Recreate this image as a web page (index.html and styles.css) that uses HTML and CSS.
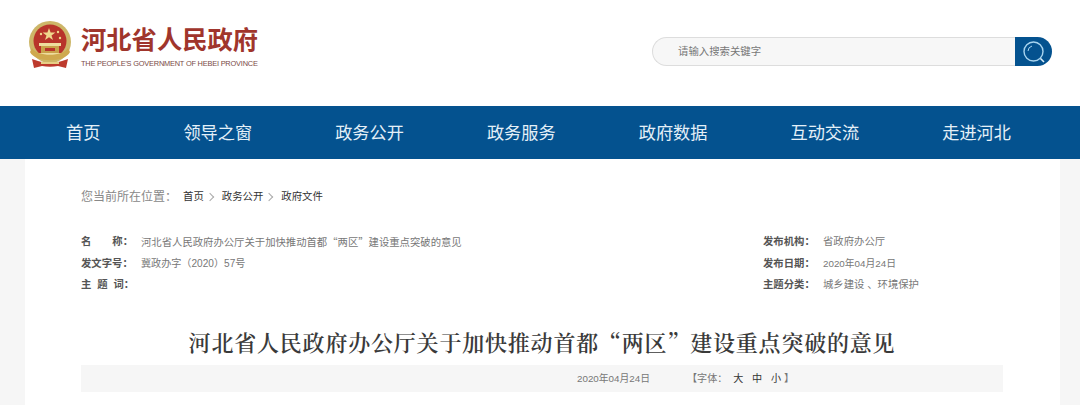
FILE: index.html
```html
<!DOCTYPE html>
<html lang="zh-CN">
<head>
    <meta charset="utf-8">
    <title>河北省人民政府</title>
    <link rel="stylesheet" href="styles.css">
</head>
<body>
    <header class="top">
        <div class="logo">
            <svg class="emblem" width="46" height="48" viewBox="0 0 46 48">
                <circle cx="23" cy="21" r="21" fill="#cdb668"/>
                <circle cx="23" cy="20" r="16.5" fill="#b8342a"/>
                <polygon points="22,7 23.6,11.6 28.4,11.6 24.5,14.4 26,19 22,16.2 18,19 19.5,14.4 15.6,11.6 20.4,11.6" fill="#f0d78c"/>
                <circle cx="14" cy="13" r="1.2" fill="#f0d78c"/>
                <circle cx="31" cy="11" r="1.2" fill="#f0d78c"/>
                <circle cx="33" cy="17" r="1.2" fill="#f0d78c"/>
                <rect x="12" y="22" width="22" height="3" fill="#eedd9e"/>
                <rect x="14" y="25" width="18" height="7" fill="#c9a24a"/>
                <rect x="18" y="27" width="10" height="3" fill="#b8342a"/>
                <rect x="9" y="32" width="28" height="3" fill="#eedd9e"/>
                <path d="M3 31 C8 42 38 42 43 31 L41 27 C36 36 10 36 5 27 Z" fill="#cfa94e"/>
                <path d="M5 38 L11 40 C18 42 28 42 35 40 L41 38 L39 47 L31 45 C26 46 20 46 15 45 L7 47 Z" fill="#bd3a2d"/>
                <rect x="14" y="41" width="18" height="2" fill="#e6cf86"/>
            </svg>
            <div class="logo-text">
                <div class="logo-cn">河北省人民政府</div>
                <div class="logo-en">THE PEOPLE'S GOVERNMENT OF HEBEI PROVINCE</div>
            </div>
        </div>
        <div class="search">
            <div class="search-input">请输入搜索关键字</div>
            <div class="search-btn">
                <svg width="26" height="26" viewBox="0 0 26 26" fill="none" stroke="#a8d4ef">
                    <circle cx="12.5" cy="12.5" r="9.5" stroke-width="1.4"/>
                    <path d="M7 12 A5.5 5.5 0 0 1 11 7" stroke-width="1"/>
                    <path d="M19.5 19.5 L23 23" stroke="#dceef9" stroke-width="1.6"/>
                </svg>
            </div>
        </div>
    </header>

    <nav class="nav">
        <a href="#">首页</a>
        <a href="#">领导之窗</a>
        <a href="#">政务公开</a>
        <a href="#">政务服务</a>
        <a href="#">政府数据</a>
        <a href="#">互动交流</a>
        <a href="#">走进河北</a>
    </nav>

    <main class="page">
        <div class="crumbs">
            <span class="crumbs-label">您当前所在位置：</span>
            <a href="#">首页</a>
            <span class="sep"></span>
            <a href="#">政务公开</a>
            <span class="sep"></span>
            <a href="#">政府文件</a>
        </div>

        <div class="meta">
            <div class="meta-col">
                <div class="meta-row"><b>名<i class="gap"></i>称：</b><span class="cjk">河北省人民政府办公厅关于加快推动首都“两区”建设重点突破的意见</span></div>
                <div class="meta-row"><b>发文字号：</b><span class="doc-no">冀政办字（2020）57号</span></div>
                <div class="meta-row"><b class="wide">主 题 词：</b><span></span></div>
            </div>
            <div class="meta-col right">
                <div class="meta-row"><b>发布机构：</b><span>省政府办公厅</span></div>
                <div class="meta-row"><b>发布日期：</b><span class="date-text">2020年04月24日</span></div>
                <div class="meta-row"><b>主题分类：</b><span>城乡建设 、环境保护</span></div>
            </div>
        </div>

        <h1 class="title">河北省人民政府办公厅关于加快推动首都“两区”建设重点突破的意见</h1>

        <div class="info-bar">
            <span class="date date-text">2020年04月24日</span>
            <span class="fontsize">【字体： <em>大</em> <em>中</em> <em>小</em>】</span>
        </div>
    </main>
</body>
</html>
```

FILE: styles.css
```css
* {
    box-sizing: border-box;
}

body {
    margin: 0;
    background-color: #f6f6f6;
    color: #555;
    font-family: "Liberation Sans", Arial, "Noto Sans CJK SC", sans-serif;
}

a {
    color: inherit;
    text-decoration: none;
}

.top {
    height: 106px;
    background-color: #fff;
    display: flex;
    justify-content: space-between;
    padding: 21px 28px 0 27px;
}

.logo {
    display: flex;
    align-items: flex-start;
    height: 50px;
}

.emblem {
    flex: none;
}

.logo-text {
    margin-left: 8px;
    padding-top: 4px;
}

.logo-cn {
    color: #a0352c;
    font-size: 25.3px;
    font-weight: bold;
    line-height: 30px;
    white-space: nowrap;
}

.logo-en {
    margin-top: 4px;
    color: #7a4a46;
    font-size: 7.4px;
    letter-spacing: -0.2px;
    line-height: 10px;
    white-space: nowrap;
}

.search {
    display: flex;
    width: 400px;
    height: 29px;
    margin-top: 16px;
}

.search-input {
    flex: 1;
    padding-left: 25px;
    background-color: #f7f7f7;
    border: 1px solid #ddd;
    border-right: 0;
    border-radius: 15px 0 0 15px;
    color: #777;
    font-size: 10.4px;
    line-height: 27px;
}

.search-btn {
    width: 37px;
    display: flex;
    align-items: center;
    justify-content: center;
    background-color: #04528f;
    border-radius: 0 15px 15px 0;
}

.nav {
    height: 53px;
    background-color: #04528f;
    display: flex;
    gap: 83px;
    padding-left: 66px;
    color: #e4f0f8;
    font-size: 17.2px;
    line-height: 54px;
}

.page {
    width: 1035px;
    height: 246px;
    margin-left: 25px;
    padding: 0 57px 0 56px;
    background-color: #fff;
    overflow: hidden;
}

.crumbs {
    display: flex;
    align-items: center;
    padding-top: 30px;
    color: #333;
    font-size: 10.4px;
    line-height: 16px;
}

.crumbs-label {
    width: 102px;
    color: #888;
    font-size: 12px;
    white-space: nowrap;
}

.sep {
    width: 6px;
    height: 6px;
    margin: 0 9px 0 3px;
    border-top: 1px solid #aaa;
    border-right: 1px solid #aaa;
    transform: rotate(45deg);
}

.meta {
    display: flex;
    justify-content: space-between;
    margin-top: 29px;
    font-size: 10.35px;
}

.meta-col.right {
    width: 240px;
}

.meta-row {
    display: flex;
    height: 21.5px;
    line-height: 16px;
}

.meta-row b {
    flex: none;
    width: 60px;
    color: #555;
}

.meta-row b.wide {
    word-spacing: 3px;
}

.meta-row .gap {
    display: inline-block;
    width: 21px;
}

.meta-row span {
    color: #777;
}

.meta-row .cjk {
    font-family: "Noto Sans CJK SC", sans-serif;
}

.meta-row .doc-no {
    font-size: 10.1px;
}

.meta-row .date-text,
.date-text {
    font-size: 9.8px;
}

.title {
    margin: 28px 0 0;
    color: #3a3a3a;
    font-family: "Noto Serif CJK SC", "Liberation Serif", "Noto Sans CJK SC", serif;
    font-size: 22px;
    font-weight: 600;
    letter-spacing: 0.8px;
    line-height: 30px;
    text-align: center;
    white-space: nowrap;
}

.info-bar {
    display: flex;
    height: 27px;
    margin-top: 8px;
    padding-left: 496px;
    background-color: #f6f6f6;
    font-size: 10.1px;
    line-height: 27px;
}

.date {
    width: 110px;
    color: #777;
}

.fontsize {
    color: #777;
}

.fontsize em {
    margin: 0 3px;
    color: #333;
    font-style: normal;
}
```
